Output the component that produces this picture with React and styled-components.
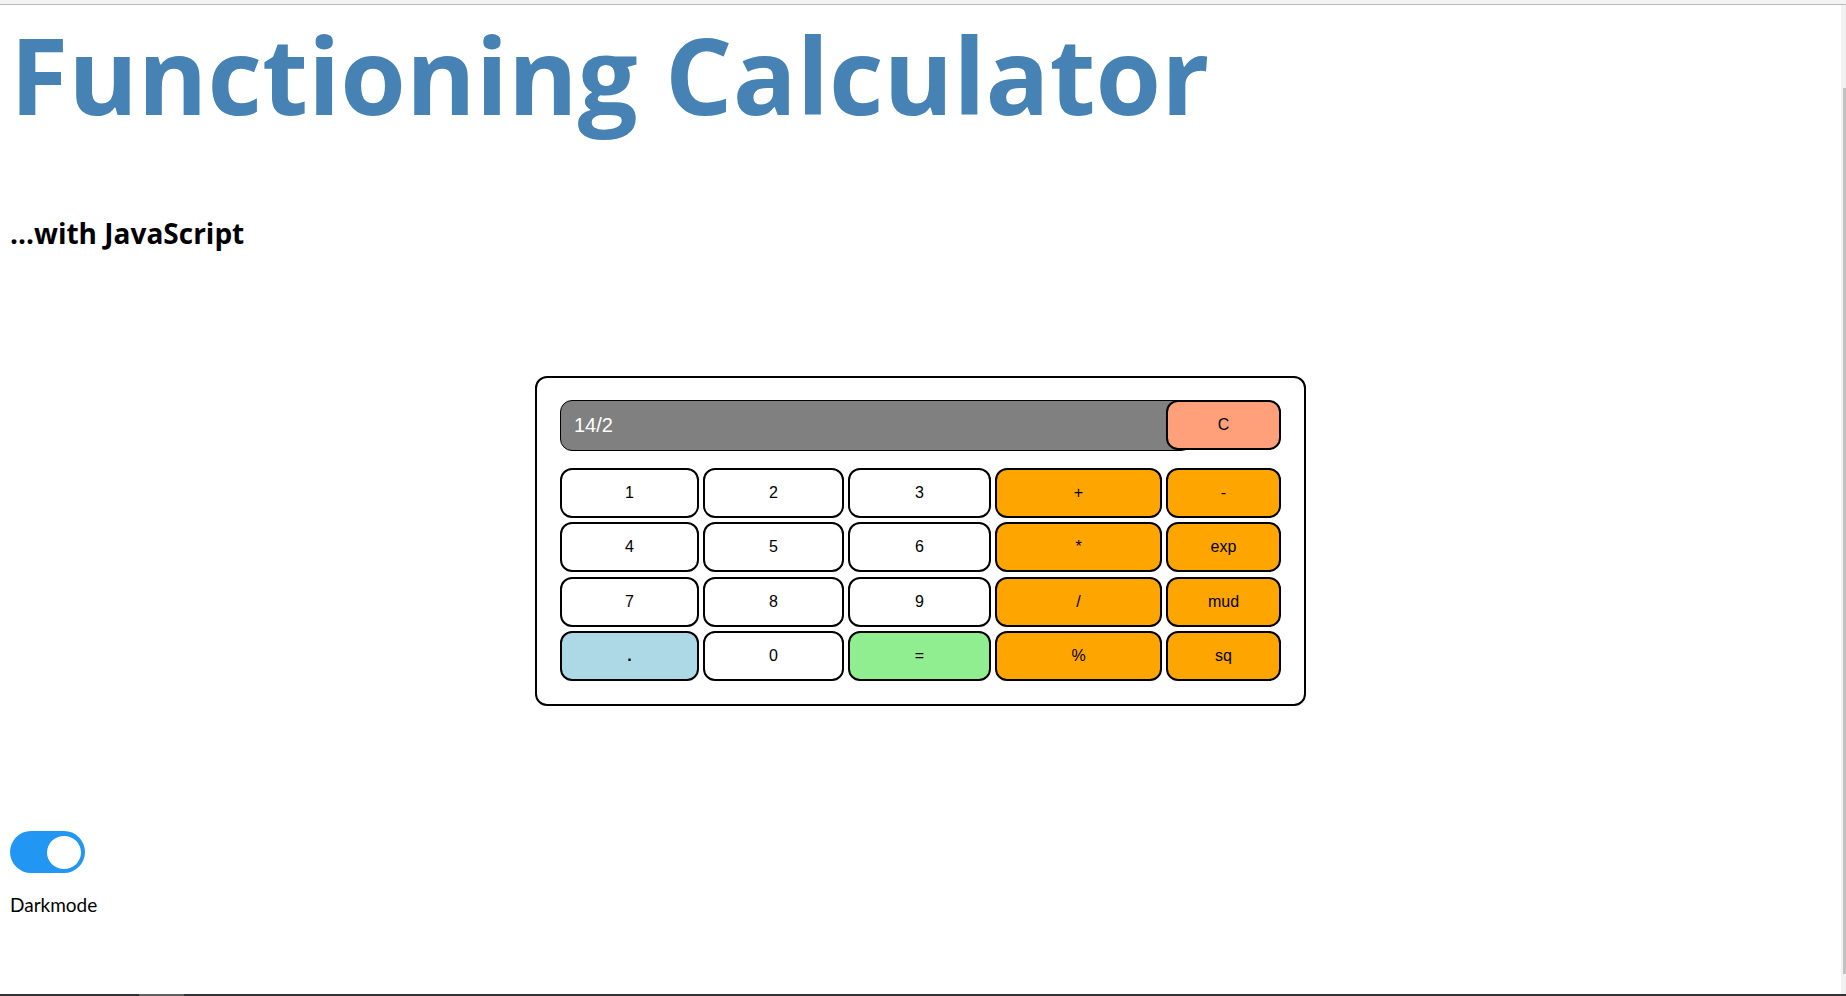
import React, { useState } from "react";
import styled, { createGlobalStyle } from "styled-components";

const GlobalStyle = createGlobalStyle`
  * { box-sizing: border-box; }
  body { margin: 0; background: #fff; color: #000; font-family: Lato, "Gill Sans", sans-serif; }
`;

const Window = styled.div`
  display: flex;
  flex-direction: column;
  min-height: 100vh;
`;

const TopEdge = styled.div`
  height: 5px;
  background: #f3f3f3;
  border-bottom: 1px solid #bbb;
`;

const Viewport = styled.div`
  display: flex;
  flex: 1;
`;

const Page = styled.main`
  flex: 1;
  padding: 10px 10px 0;
`;

const ScrollTrack = styled.div`
  width: 5px;
  padding: 83px 0 20px 2px;
  background: #f1f1f1;
  display: flex;
`;

const ScrollThumb = styled.div`
  flex: 1;
  background: #c1c1c1;
`;

const Taskbar = styled.div`
  height: 2px;
  padding-left: 139px;
  background: #333335;
`;

const ActiveTask = styled.div`
  width: 45px;
  height: 2px;
  background: #606060;
`;

const Title = styled.h1`
  margin: 0;
  color: steelblue;
  font-family: "Open Sans", "Gill Sans", sans-serif;
  font-size: 106px;
  font-weight: 700;
  line-height: 118px;
`;

const Subtitle = styled.h2`
  margin: 80px 0 0;
  font-family: "Open Sans", "Gill Sans", sans-serif;
  font-size: 28px;
  font-weight: 700;
  line-height: 40px;
`;

const Calculator = styled.form`
  width: 100%;
  max-width: 771px;
  margin: 123px auto 0;
  padding: 22px 23px 23px;
  border: 2px solid #000;
  border-radius: 12px;
`;

const Row = styled.div`
  display: grid;
  grid-template-columns: 139fr 141fr 143fr 167fr 115fr;
  gap: 4px;
`;

const DisplayRow = styled(Row)`
  align-items: start;
  margin-bottom: 17px;
`;

const Keypad = styled(Row)`
  grid-auto-rows: 1fr;
  min-height: 213px;
`;

const Display = styled.input`
  grid-column: 1 / 5;
  min-width: 0;
  height: 51px;
  margin-right: -31px;
  padding: 0 13px;
  border: 1px solid #000;
  border-radius: 12px;
  background: gray;
  color: #fff;
  font: 20px "Liberation Sans", Arial, sans-serif;
`;

const Key = styled.button`
  z-index: 1;
  height: 50px;
  padding: 0;
  border: 2px solid #000;
  border-radius: 12px;
  background: ${(p) => p.$fill || "#fff"};
  color: #000;
  font: ${(p) => (p.$bold ? "bold" : "normal")} 16px "Liberation Sans", Arial, sans-serif;
  cursor: pointer;
`;

const Switch = styled.label`
  display: block;
  width: fit-content;
  margin-top: 125px;
  font-size: 19px;
  line-height: 26px;
`;

const SwitchInput = styled.input`
  appearance: none;
  display: flex;
  align-items: center;
  width: 75px;
  height: 42px;
  margin: 0 0 19px;
  padding: 0 4px;
  border-radius: 21px;
  background: #ccc;
  cursor: pointer;

  &::before {
    content: "";
    width: 34px;
    height: 33px;
    border-radius: 50%;
    background: #fff;
  }

  &:checked {
    justify-content: flex-end;
    background: #2196f3;
  }
`;

const keys = [
  ["1"], ["2"], ["3"], ["+", "orange"], ["-", "orange"],
  ["4"], ["5"], ["6"], ["*", "orange"], ["exp", "orange"],
  ["7"], ["8"], ["9"], ["/", "orange"], ["mud", "orange"],
  [".", "lightblue"], ["0"], ["=", "lightgreen"], ["%", "orange"], ["sq", "orange"],
];

export default function App() {
  const [value, setValue] = useState("14/2");
  const [on, setOn] = useState(true);

  return (
    <>
      <GlobalStyle />
      <Window>
        <TopEdge />
        <Viewport>
          <Page>
            <Title>Functioning Calculator</Title>
            <Subtitle>...with JavaScript</Subtitle>
            <Calculator onSubmit={(e) => e.preventDefault()}>
              <DisplayRow>
                <Display
                  type="text"
                  aria-label="Expression"
                  value={value}
                  onChange={(e) => setValue(e.target.value)}
                />
                <Key type="button" $fill="lightsalmon" onClick={() => setValue("")}>C</Key>
              </DisplayRow>
              <Keypad>
                {keys.map(([label, fill]) => (
                  <Key
                    key={label}
                    type="button"
                    $fill={fill}
                    $bold={label === "."}
                    onClick={() => setValue(value + label)}
                  >
                    {label}
                  </Key>
                ))}
              </Keypad>
            </Calculator>
            <Switch>
              <SwitchInput type="checkbox" checked={on} onChange={(e) => setOn(e.target.checked)} />
              Darkmode
            </Switch>
          </Page>
          <ScrollTrack>
            <ScrollThumb />
          </ScrollTrack>
        </Viewport>
        <Taskbar>
          <ActiveTask />
        </Taskbar>
      </Window>
    </>
  );
}
